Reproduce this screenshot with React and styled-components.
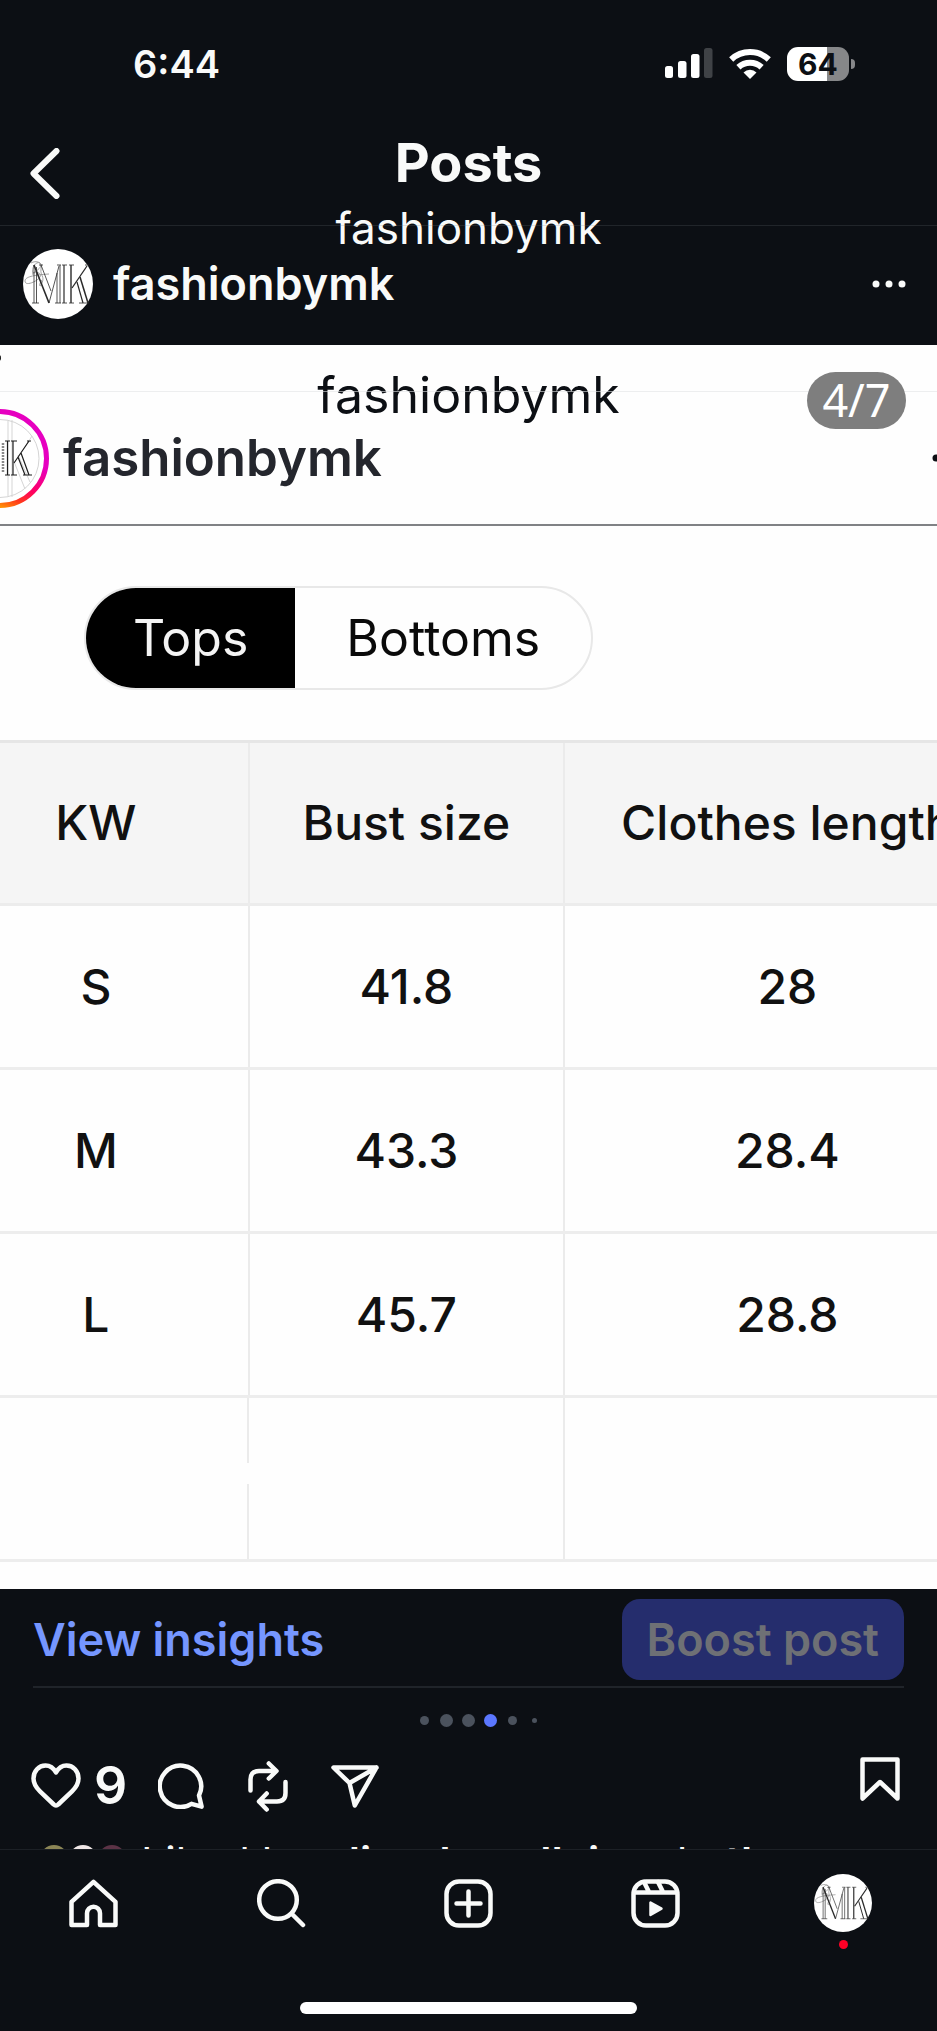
import React from "react";
import styled, { createGlobalStyle } from "styled-components";

const ink = "#0c0f14";
const paper = "#f9faf9";

const GlobalStyle = createGlobalStyle`
  * { box-sizing: border-box; }
  body {
    margin: 0;
    background: ${ink};
    color: ${paper};
    font-family: Inter, "Liberation Sans", sans-serif;
  }
  button { font: inherit; color: inherit; background: none; border: 0; padding: 0; cursor: pointer; }
  a { color: inherit; text-decoration: none; }
  svg { display: block; flex: none; }
`;

const Screen = styled.div`
  display: flex;
  flex-direction: column;
  min-height: 100vh;
  overflow: hidden;
`;

const StatusBar = styled.div`
  display: flex;
  align-items: center;
  justify-content: space-between;
  height: 131px;
  padding: 0 82px 4px 133px;
`;

const Clock = styled.time`
  font-size: 38px;
  line-height: 48px;
  font-weight: 600;
`;

const StatusIcons = styled.div`
  display: flex;
  align-items: center;
  gap: 16px;
`;

const Battery = styled.div`
  display: flex;
  align-items: center;
  gap: 2px;
`;

const BatteryLevel = styled.div`
  width: 62px;
  height: 34px;
  border-radius: 11px;
  background: linear-gradient(90deg, #ffffff 64%, #868789 64%);
  color: ${ink};
  font-size: 30px;
  line-height: 34px;
  font-weight: 700;
  text-align: center;
`;

const BatteryTip = styled.div`
  width: 4px;
  height: 10px;
  border-radius: 0 4px 4px 0;
  background: #868789;
`;

const Header = styled.header`
  display: grid;
  grid-template-columns: 1fr auto 1fr;
  height: 94px;
`;

const BackButton = styled.button`
  justify-self: start;
  align-self: start;
  padding: 17px 30px;
`;

const Titles = styled.div`
  display: flex;
  flex-direction: column;
  align-items: center;
  gap: 5px;
`;

const Title = styled.h1`
  margin: 0;
  font-size: 54px;
  line-height: 64px;
  font-weight: 700;
`;

const Account = styled.span`
  font-size: 44px;
  line-height: 56px;
  font-weight: 400;
`;

const HeaderRule = styled.hr`
  position: relative;
  width: 100%;
  margin: 0;
  border: 0;
  border-top: 1px solid ${(p) => p.$color};
`;

const PostHeader = styled.div`
  display: flex;
  align-items: center;
  gap: 20px;
  height: 119px;
  padding: 0 30px 3px 23px;
`;

const PostAuthor = styled.a`
  flex: 1;
  font-size: 45px;
  line-height: 56px;
  font-weight: 600;
`;

const Slide = styled.section`
  position: relative;
  overflow: hidden;
  background: #fefefe;
  color: #0c0f14;
  padding-bottom: 27px;
`;

const SlideTitle = styled.div`
  height: 46px;
  padding-top: 18px;
  text-align: center;
  font-size: 50px;
  line-height: 64px;
  font-weight: 400;
`;

const SlideAuthor = styled.div`
  display: flex;
  align-items: center;
  height: 134px;
  margin: 0 -30px 0 -50px;
  border-bottom: 2px solid #808285;
`;

const SlideAuthorName = styled.span`
  flex: 1;
  padding-left: 14px;
  color: #24262d;
  font-size: 51px;
  line-height: 64px;
  font-weight: 600;
`;

const Speck = styled.span`
  position: absolute;
  left: -4px;
  top: 10px;
  width: 5px;
  height: 6px;
  border-radius: 3px;
  background: #222222;
`;

const Counter = styled.span`
  position: absolute;
  top: 27px;
  right: 31px;
  width: 99px;
  height: 57px;
  border-radius: 29px;
  background: #7e7e7e;
  color: #ffffff;
  font-family: "Noto Sans", sans-serif;
  font-size: 45px;
  line-height: 56px;
  text-align: center;
`;

const Toggle = styled.div`
  display: flex;
  width: fit-content;
  margin: 60px 0 50px 84px;
  border: 2px solid #e8e8e8;
  border-radius: 52px;
  overflow: hidden;
`;

const ToggleOption = styled.button`
  height: 100px;
  padding: 0 ${(p) => (p.$active ? "47px" : "51px")};
  background: ${(p) => (p.$active ? "#000000" : "transparent")};
  color: ${(p) => (p.$active ? "#f4f4f4" : "#0a0a0a")};
  font-size: 50px;
  line-height: 60px;
  font-weight: 400;
`;

const SizeTable = styled.table`
  width: 114%;
  margin-left: -6%;
  table-layout: fixed;
  border-collapse: collapse;
  border-top: 3px solid #e6e6e6;
  border-bottom: 3px solid #dedede;
  color: #111111;
  font-size: 48px;
  line-height: 58px;
`;

const SizeColumn = styled.col`
  width: ${(p) => p.$width};
`;

const HeadCell = styled.th`
  height: 163px;
  padding: 0;
  background: #f5f5f5;
  border-right: 2px solid #ebebeb;
  border-bottom: 3px solid #ececec;
  font-weight: 500;
  white-space: nowrap;
`;

const Cell = styled.td`
  height: 164px;
  padding: 0;
  border-right: 2px solid #ebebeb;
  border-bottom: 3px solid #ededed;
  font-weight: 500;
  text-align: center;
`;

const FadedCell = styled(Cell)`
  border-right: 0;
  background: linear-gradient(#ebebeb 65px, transparent 65px 86px, #ebebeb 86px) right / 2px 100% no-repeat;
`;

const InsightsRow = styled.div`
  display: flex;
  align-items: center;
  justify-content: space-between;
  margin: 0 33px;
  padding: 10px 0 6px;
  border-bottom: 2px solid #20242a;
`;

const InsightsLink = styled.a`
  color: #7596ff;
  font-size: 45px;
  line-height: 56px;
  font-weight: 600;
`;

const BoostButton = styled.button`
  height: 81px;
  padding: 0 25px;
  border-radius: 18px;
  background: #252d6d;
  color: #6e7075;
  font-size: 45px;
  line-height: 56px;
  font-weight: 600;
`;

const Pager = styled.div`
  display: flex;
  justify-content: center;
  align-items: center;
  height: 65px;
  margin-right: -22px;
`;

const PagerStep = styled.span`
  display: flex;
  justify-content: center;
  width: 22px;
  &::before {
    content: "";
    width: ${(p) => p.$size}px;
    height: ${(p) => p.$size}px;
    border-radius: 50%;
    background: ${(p) => (p.$active ? "#5b77ff" : "#4b525d")};
  }
`;

const Actions = styled.div`
  display: flex;
  align-items: center;
  height: 58px;
  margin-top: 4px;
  padding: 0 37px 0 31px;
`;

const ActionButton = styled.button`
  display: flex;
  align-items: center;
  gap: 13px;
  margin-right: ${(p) => p.$after || "0"};
  font-size: 52px;
  line-height: 58px;
  font-weight: 600;
`;

const SaveButton = styled(ActionButton)`
  align-self: flex-start;
  margin-left: auto;
`;

const LikedBy = styled.div`
  display: flex;
  gap: 14px;
  height: 4px;
  margin-top: 30px;
  padding-left: 40px;
  overflow: hidden;
`;

const LikerStack = styled.div`
  display: flex;
`;

const Liker = styled.span`
  width: 28px;
  height: 28px;
  border-radius: 50%;
  margin-right: 1px;
  background: ${(p) => p.$tone};
`;

const LikedText = styled.p`
  margin: 0;
  padding-top: 1px;
  font-size: 43px;
  line-height: 32px;
  white-space: nowrap;

  b {
    font-weight: 600;
  }
`;

const TabBar = styled.nav`
  border-top: 1px solid #1c2026;
`;

const TabList = styled.div`
  display: grid;
  grid-template-columns: repeat(5, 1fr);
  justify-items: center;
  align-items: center;
  padding-top: 24px;
`;

const TabLink = styled.a`
  position: relative;
`;

const UnreadDot = styled.span`
  position: absolute;
  bottom: -17px;
  left: calc(50% - 4px);
  width: 9px;
  height: 9px;
  border-radius: 50%;
  background: #ff0026;
`;

const HomeIndicator = styled.div`
  width: 36%;
  height: 12px;
  margin: 70px auto 17px;
  border-radius: 6px;
  background: #ffffff;
`;

function Icon({ w, h, stroke = 4.5, children }) {
  return (
    <svg
      width={w}
      height={h}
      viewBox={`0 0 ${w} ${h}`}
      fill="none"
      stroke={paper}
      strokeWidth={stroke}
      strokeLinecap="round"
      strokeLinejoin="round"
      aria-hidden="true"
    >
      {children}
    </svg>
  );
}

function Monogram({ size }) {
  return (
    <svg width={size} height={size} viewBox="0 0 70 70" fill="none" stroke="#2a2a2a" strokeWidth="0.8" role="img" aria-label="MK logo">
      <circle cx="35" cy="35" r="35" fill="#fff" stroke="none" />
      <g stroke="#8a8a8a">
        <path d="M10 26C8 18 13 12 17 14C20 16 16 21 10 24C18 22 20 27 14 31C8 35 2 36 2 32C2 28 10 26 26 25" />
        <path d="M8 14C13 11 20 13 18 20C17 27 22 27 19 34C17 40 15 36 19 31" />
      </g>
      <line x1="11" y1="16" x2="11" y2="54" />
      <line x1="13.5" y1="18" x2="13.5" y2="54" />
      <line x1="11" y1="16" x2="26" y2="54" strokeWidth="1.6" />
      <line x1="18" y1="16" x2="28" y2="42" />
      <line x1="16" y1="16" x2="20" y2="16" />
      <line x1="26" y1="54" x2="36" y2="17" />
      <line x1="34" y1="16" x2="38" y2="16" />
      <line x1="37" y1="16" x2="37" y2="54" />
      <line x1="34" y1="24" x2="34" y2="54" />
      <line x1="32" y1="54" x2="38" y2="54" />
      <line x1="9" y1="54" x2="16" y2="54" />
      <line x1="41" y1="16" x2="41" y2="54" strokeWidth="1.2" />
      <line x1="39" y1="16" x2="44" y2="16" />
      <line x1="39" y1="54" x2="44" y2="54" />
      <line x1="48" y1="16" x2="48" y2="54" strokeWidth="1.4" />
      <line x1="46" y1="16" x2="51" y2="16" />
      <line x1="46" y1="54" x2="51" y2="54" />
      <line x1="64" y1="17" x2="49" y2="39" strokeWidth="1.3" />
      <line x1="62" y1="16" x2="66" y2="16" />
      <line x1="54" y1="33" x2="60" y2="54" strokeWidth="1.2" />
      <line x1="57" y1="28" x2="65" y2="54" strokeWidth="1.5" />
      <line x1="56" y1="54" x2="66" y2="54" />
    </svg>
  );
}

function StoryAvatar() {
  return (
    <svg width="99" height="99" viewBox="0 0 99 99" fill="none" role="img" aria-label="Story of fashionbymk">
      <defs>
        <linearGradient id="storyRing" x1="0.8" y1="0" x2="0.4" y2="1">
          <stop offset="0.45" stopColor="#e600c0" />
          <stop offset="0.72" stopColor="#ff0060" />
          <stop offset="0.86" stopColor="#ff3a1a" />
          <stop offset="1" stopColor="#ffa400" />
        </linearGradient>
      </defs>
      <circle cx="49.5" cy="49.5" r="47" fill="#fff" stroke="url(#storyRing)" strokeWidth="5" />
      <g stroke="#d5d5d5">
        <circle cx="50" cy="49.5" r="39" />
        <path d="M58 11V88M62 11V88M75 38L82 27M63 50L75 80M68 46L80 73" />
      </g>
      <g stroke="#1d1d1d" strokeWidth="1.2">
        <path d="M57.5 32V66M63 32V66" />
        <path d="M55 32H60M55 66H60M61 32H67M61 66H67M77 32H81M73 66H82" strokeWidth="1" />
        <path d="M79 32L64 54M68 48L75 66M71 44L79 66" />
      </g>
      <path d="M53 34V64" stroke="#888" strokeWidth="2.5" strokeDasharray="2 1" />
    </svg>
  );
}

function MoreDots({ color }) {
  return (
    <svg width="36" height="8" viewBox="0 0 36 8" fill={color} aria-hidden="true">
      <circle cx="5" cy="4" r="3.5" />
      <circle cx="18" cy="4" r="3.5" />
      <circle cx="31" cy="4" r="3.5" />
    </svg>
  );
}

const sizes = [
  ["S", "41.8", "28"],
  ["M", "43.3", "28.4"],
  ["L", "45.7", "28.8"],
];

export default function App() {
  return (
    <Screen>
      <GlobalStyle />
      <StatusBar>
        <Clock>6:44</Clock>
        <StatusIcons>
          <svg width="48" height="31" viewBox="0 0 48 31" fill="#fff" aria-label="Signal">
            <rect x="0" y="18" width="8" height="12" rx="2.5" />
            <rect x="13" y="13" width="8.5" height="17" rx="2.5" />
            <rect x="26" y="6" width="8.5" height="24" rx="2.5" />
            <rect x="39" y="0" width="8.5" height="30" rx="2.5" fill="#3f4246" />
          </svg>
          <svg width="42" height="32" viewBox="0 0 42 32" fill="none" stroke="#fff" strokeWidth="6" aria-label="Wi-Fi">
            <path d="M2.2 11.5A27.5 27.5 0 0 1 39.8 11.5" />
            <path d="M9.4 19.2A17 17 0 0 1 32.6 19.2" />
            <path d="M21 31L14.5 24.4A9.5 9.5 0 0 1 27.5 24.4Z" fill="#fff" stroke="none" />
          </svg>
          <Battery aria-label="Battery 64 percent">
            <BatteryLevel>64</BatteryLevel>
            <BatteryTip />
          </Battery>
        </StatusIcons>
      </StatusBar>

      <Header>
        <BackButton aria-label="Back">
          <Icon w={30} h={51} stroke={6}>
            <path d="M26.5 3L3.5 25.5L26.5 48" />
          </Icon>
        </BackButton>
        <Titles>
          <Title>Posts</Title>
          <Account>fashionbymk</Account>
        </Titles>
      </Header>
      <HeaderRule $color="rgba(120, 124, 132, 0.2)" />

      <PostHeader>
        <Monogram size={70} />
        <PostAuthor href="#profile">fashionbymk</PostAuthor>
        <button aria-label="More options">
          <MoreDots color={paper} />
        </button>
      </PostHeader>

      <Slide>
        <Speck />
        <SlideTitle>fashionbymk</SlideTitle>
        <HeaderRule $color="rgba(225, 226, 228, 0.6)" />
        <SlideAuthor>
          <StoryAvatar />
          <SlideAuthorName>fashionbymk</SlideAuthorName>
          <MoreDots color="#0c0f14" />
        </SlideAuthor>
        <Counter>4/7</Counter>
        <Toggle>
          <ToggleOption $active aria-pressed="true">Tops</ToggleOption>
          <ToggleOption aria-pressed="false">Bottoms</ToggleOption>
        </Toggle>
        <SizeTable>
          <colgroup>
            <SizeColumn $width="28.6%" />
            <SizeColumn $width="29.5%" />
            <SizeColumn $width="41.9%" />
          </colgroup>
          <thead>
            <tr>
              <HeadCell scope="col">KW</HeadCell>
              <HeadCell scope="col">Bust size</HeadCell>
              <HeadCell scope="col">Clothes length</HeadCell>
            </tr>
          </thead>
          <tbody>
            {sizes.map((row) => (
              <tr key={row[0]}>
                {row.map((value) => (
                  <Cell key={value}>{value}</Cell>
                ))}
              </tr>
            ))}
            <tr>
              <FadedCell />
              <Cell />
              <Cell />
            </tr>
          </tbody>
        </SizeTable>
      </Slide>

      <InsightsRow>
        <InsightsLink href="#insights">View insights</InsightsLink>
        <BoostButton>Boost post</BoostButton>
      </InsightsRow>

      <Pager>
        <PagerStep $size={9} />
        <PagerStep $size={13} />
        <PagerStep $size={13} />
        <PagerStep $size={13} $active />
        <PagerStep $size={9} />
        <PagerStep $size={5} />
      </Pager>

      <Actions>
        <ActionButton $after="31px" aria-label="Like, 9 likes">
          <Icon w={50} h={46}>
            <path d="M25 9.5C22.5 5 18.8 2.5 14.6 2.5C7.8 2.5 2.5 8 2.5 15.5C2.5 21 5.5 25 9 28.3L22.8 41.5C24 42.7 26 42.7 27.2 41.5L41 28.3C44.5 25 47.5 21 47.5 15.5C47.5 8 42.2 2.5 35.4 2.5C31.2 2.5 27.5 5 25 9.5Z" />
          </Icon>
          9
        </ActionButton>
        <ActionButton $after="44px" aria-label="Comment">
          <Icon w={46} h={46}>
            <path d="M41 32.5A20.7 20.7 0 1 0 33.5 40.8L43.6 43.6Z" />
          </Icon>
        </ActionButton>
        <ActionButton $after="43px" aria-label="Repost">
          <Icon w={40} h={51}>
            <path d="M2.5 29.5V18.5Q2.5 10 11 10H28M20.8 2.5L28.5 10L20.8 17.5" />
            <path d="M37.5 21V32Q37.5 40.5 29 40.5H11M18.7 32.5L11 40.5L18.7 48.5" />
          </Icon>
        </ActionButton>
        <ActionButton aria-label="Share">
          <Icon w={48} h={43}>
            <path d="M2.5 2.5H45.5L23.8 40.5L18.5 18ZM18.5 18L45.5 2.5" />
          </Icon>
        </ActionButton>
        <SaveButton aria-label="Save">
          <Icon w={40} h={44}>
            <path d="M2.5 2.5H37.5V41.5L20 25L2.5 41.5Z" />
          </Icon>
        </SaveButton>
      </Actions>

      <LikedBy>
        <LikerStack>
          <Liker $tone="#8b8556" />
          <Liker $tone="#efe6e6" />
          <Liker $tone="#5b3346" />
        </LikerStack>
        <LikedText>
          Liked by <b>clinodsarallei</b> and <b>others</b>
        </LikedText>
      </LikedBy>

      <TabBar aria-label="Main">
        <TabList>
          <TabLink href="#home" aria-label="Home">
            <Icon w={49} h={49}>
              <path d="M2.5 22.8L24.5 2.8L46.5 22.8V46H31V34.2A6.5 6.5 0 0 0 18 34.2V46H2.5Z" />
            </Icon>
          </TabLink>
          <TabLink href="#search" aria-label="Search">
            <Icon w={49} h={49}>
              <circle cx="21" cy="21" r="18.8" />
              <path d="M35 35L46 46" />
            </Icon>
          </TabLink>
          <TabLink href="#create" aria-label="Create">
            <Icon w={49} h={49}>
              <rect x="2.5" y="2.5" width="44" height="44" rx="12.5" />
              <path d="M12.5 24.5H36.5M24.5 12.5V36.5" />
            </Icon>
          </TabLink>
          <TabLink href="#reels" aria-label="Reels">
            <Icon w={49} h={49}>
              <rect x="2.5" y="2.5" width="44" height="44" rx="12.5" />
              <path d="M3 13.5H46M13 3L18 13M27 3L32 13" />
              <path d="M19.5 23.5V36L30.5 29.7Z" strokeWidth="2.5" fill={paper} />
            </Icon>
          </TabLink>
          <TabLink href="#profile" aria-label="Profile, new activity">
            <Monogram size={58} />
            <UnreadDot />
          </TabLink>
        </TabList>
        <HomeIndicator />
      </TabBar>
    </Screen>
  );
}
